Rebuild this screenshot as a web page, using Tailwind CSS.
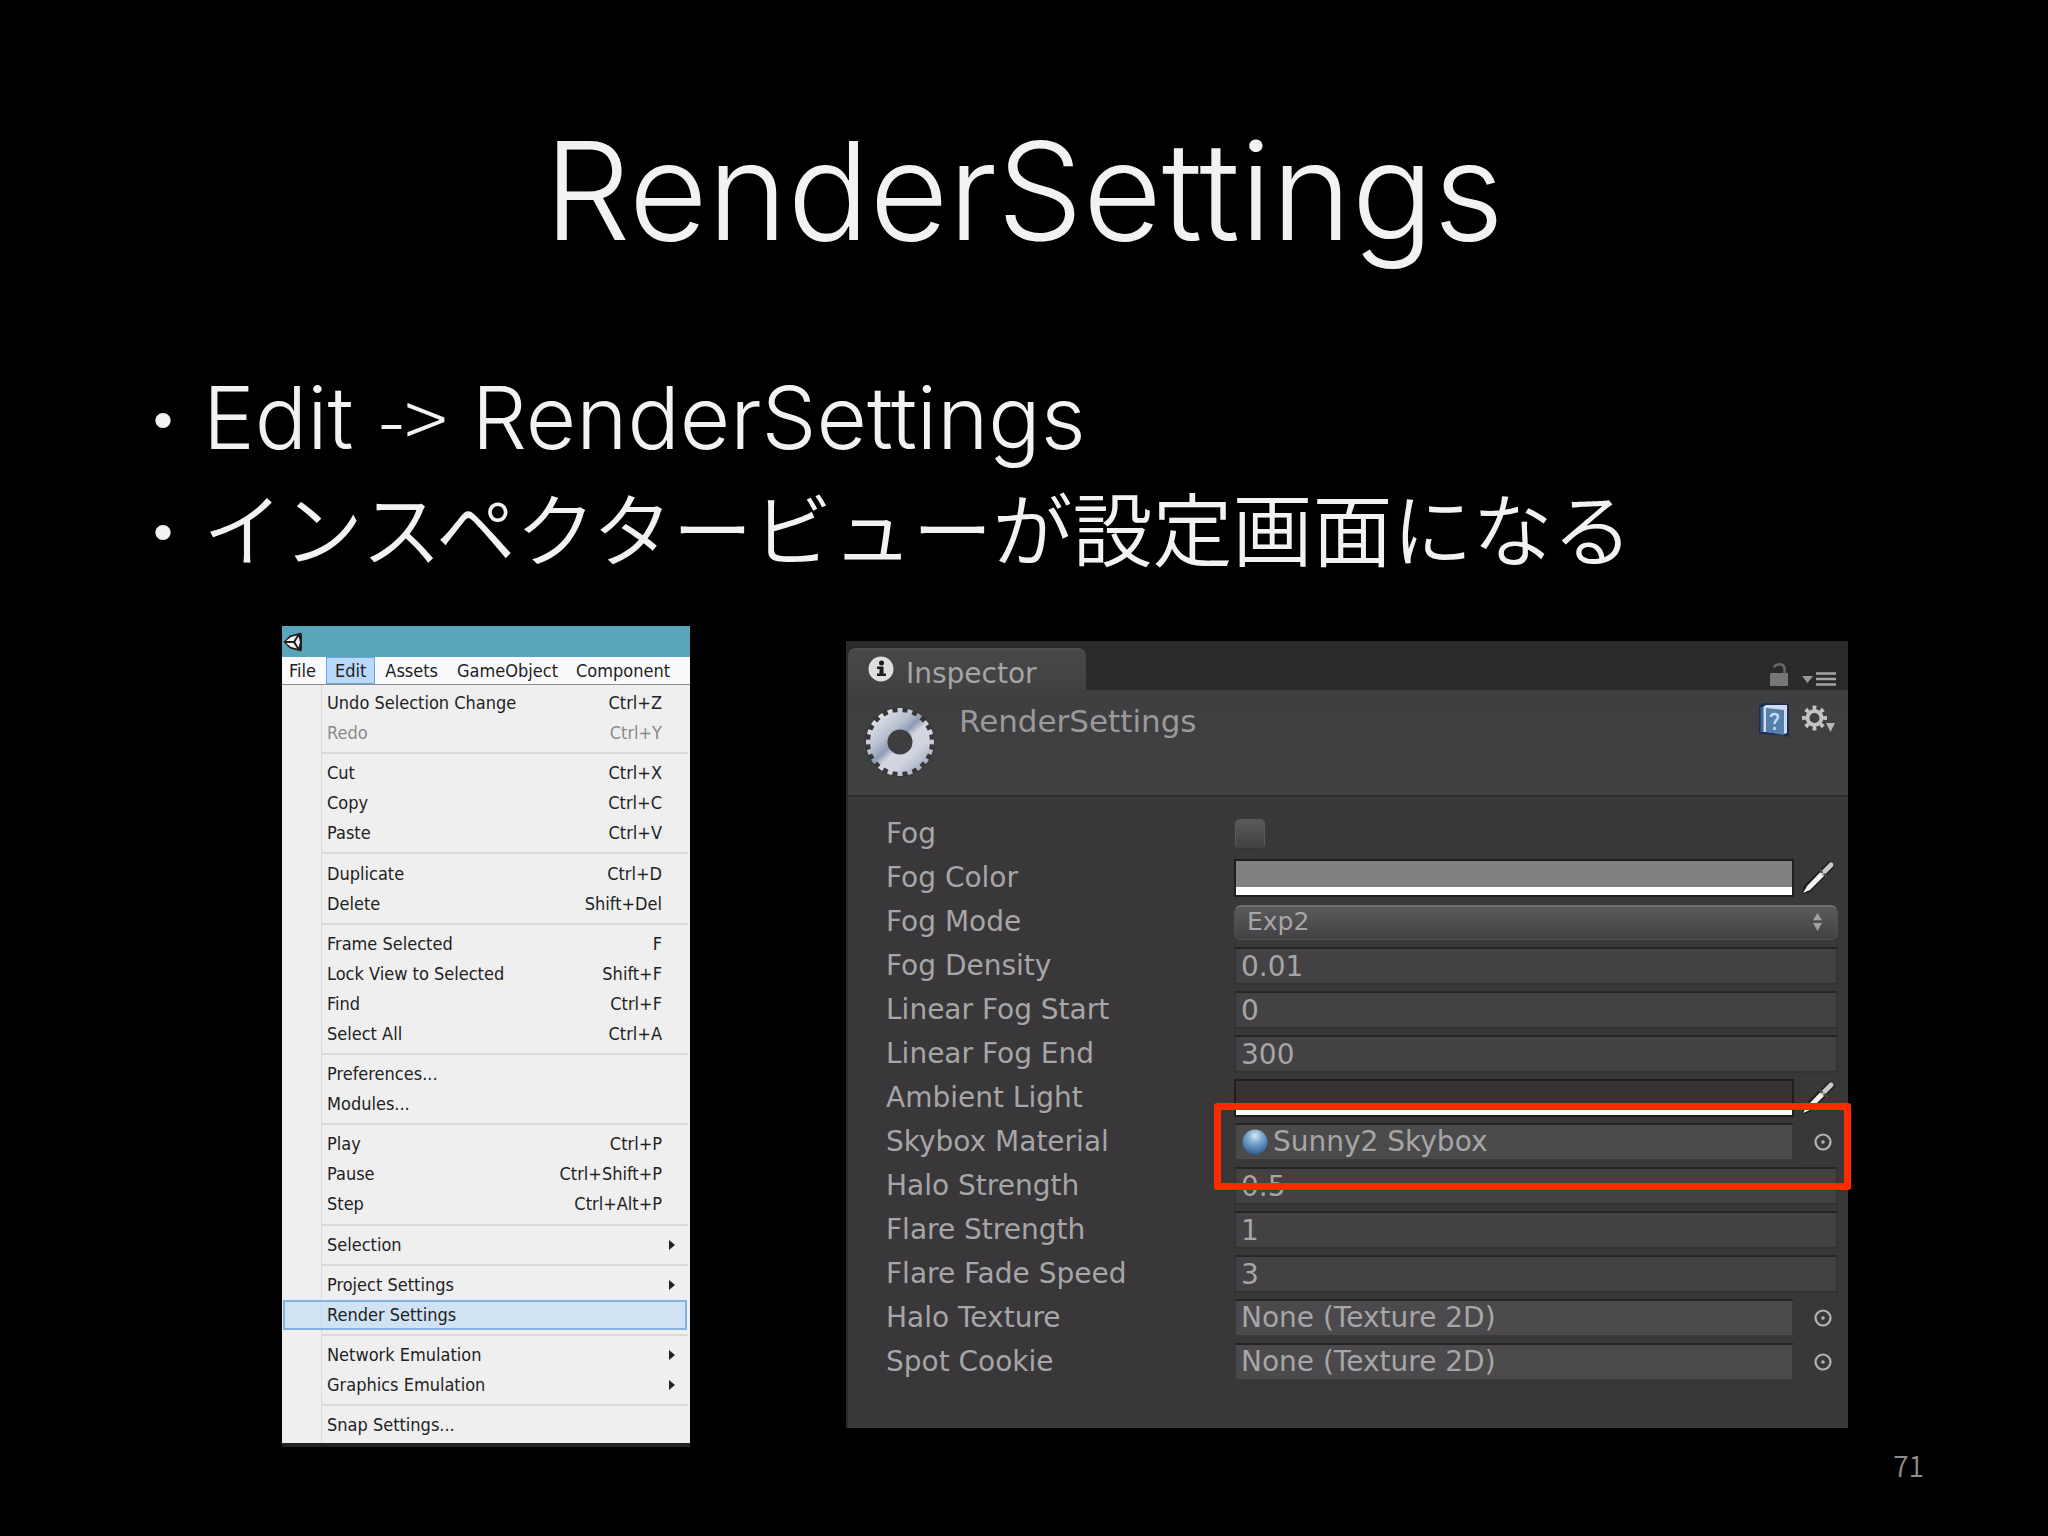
<!DOCTYPE html>
<html lang="ja">
<head>
<meta charset="utf-8">
<meta name="viewport" content="width=device-width, initial-scale=1">
<title>RenderSettings</title>
<script src="https://cdn.jsdelivr.net/npm/@tailwindcss/browser@4"></script>
</head>
<body class="bg-black">
<svg class="hidden" aria-hidden="true">
  <defs>
    <symbol id="target" viewBox="0 0 20 20">
      <circle cx="10" cy="10" r="7.5" fill="none" stroke="#b4b4b4" stroke-width="2.2"/>
      <circle cx="10" cy="10" r="1.8" fill="#b4b4b4"/>
    </symbol>
    <symbol id="dropper" viewBox="0 0 36 36">
      <path d="M2 34 L4 26 L19 11 L25 17 L10 32 Z" fill="#1a1a1a"/>
      <path d="M22 14 L30 6" stroke="#1c1c1c" stroke-width="8" stroke-linecap="round"/>
      <path d="M3 33 L7 26 L20 12.500 L24 16 L10 30 Z" fill="#f4f4f4"/>
      <path d="M23 13 L31 5" stroke="#c9c9c9" stroke-width="5" stroke-linecap="round"/>
      <path d="M20 10 L27 17" stroke="#4c4c4c" stroke-width="2" stroke-linecap="round" stroke-dasharray="3 3"/>
    </symbol>
    <symbol id="submenu" viewBox="0 0 6 10"><path d="M0 0 L6 5 L0 10 Z" fill="#222"/></symbol>
  </defs>
</svg>

<main class="flex min-h-screen flex-col bg-black text-[#f2f2f2]">
  <h1 class="pt-[107px] text-center font-['Inter','Noto_Sans_CJK_JP',sans-serif] text-[136px] leading-[168px] font-light">RenderSettings</h1>

  <ul class="mt-[87px] pl-[123px] font-['Noto_Sans_CJK_JP',sans-serif] text-[80px] leading-[106px] font-[350]">
    <li class="flex h-28"><span class="font-light">・</span><span class="font-['Inter',sans-serif] text-[87px] leading-[112px] font-light">Edit <span class="font-['Noto_Sans_CJK_JP',sans-serif] text-[80px] leading-none">-&gt;</span> RenderSettings</span></li>
    <li class="flex h-28"><span class="font-light">・</span><span class="leading-[102px]">インスペクタービューが設定画面になる</span></li>
  </ul>

  <div class="mt-10 flex items-start gap-[156px] pr-[200px] pl-[282px]">

    <section aria-label="Edit menu" class="w-[408px] shrink-0 border-b-4 border-[#222] bg-[#f0eff0] font-['DejaVu_Sans_Condensed','DejaVu_Sans',sans-serif] text-[18px] text-[#222]">
      <div class="flex h-[31px] items-center bg-[#59a5b9] pl-px">
        <svg class="size-5" viewBox="0 0 20 20" aria-hidden="true">
          <path d="M0.500 10 L7 3.500 L18 0.500 L19 3 L19 17 L18 19.500 L7 16.500 Z" fill="#1f1f1f"/>
          <path d="M3 9 L8 5 L14 3.500 L10.500 9 Z M3 11 L10.500 11 L14 16.500 L8 15 Z M15.500 4.500 L17 10 L15.500 15.500 L12.300 10 Z" fill="#f1f1f1"/>
        </svg>
      </div>
      <nav class="flex h-7 overflow-hidden border-b border-[#8c8c8c] bg-[#fafafc] leading-[26px]">
        <button class="pr-[10px] pl-[7px]">File</button>
        <button class="border border-[#6fa4dc] bg-[#b9d9fa] px-2 leading-6">Edit</button>
        <button class="px-[10px]">Assets</button>
        <button class="px-[9px]">GameObject</button>
        <button class="px-[9px]">Component</button>
      </nav>
      <ul class="flex min-h-[758px] flex-col bg-[linear-gradient(to_right,#f0eff0_39px,#dcdbdc_39px,#dcdbdc_40px,#f0eff0_40px)] pt-[3px] pb-[3px] leading-[30px]">
        <li class="flex flex-auto"><button class="flex flex-1 items-center justify-between pr-7 pl-[45px]"><span>Undo Selection Change</span><span>Ctrl+Z</span></button></li>
        <li class="flex flex-auto text-[#8b8a8b]"><button disabled class="flex flex-1 items-center justify-between pr-7 pl-[45px]"><span>Redo</span><span>Ctrl+Y</span></button></li>
        <li role="separator" class="my-1 mr-[2px] ml-10 h-[2px] bg-[#dad9da]"></li>
        <li class="flex flex-auto"><button class="flex flex-1 items-center justify-between pr-7 pl-[45px]"><span>Cut</span><span>Ctrl+X</span></button></li>
        <li class="flex flex-auto"><button class="flex flex-1 items-center justify-between pr-7 pl-[45px]"><span>Copy</span><span>Ctrl+C</span></button></li>
        <li class="flex flex-auto"><button class="flex flex-1 items-center justify-between pr-7 pl-[45px]"><span>Paste</span><span>Ctrl+V</span></button></li>
        <li role="separator" class="my-1 mr-[2px] ml-10 h-[2px] bg-[#dad9da]"></li>
        <li class="flex flex-auto"><button class="flex flex-1 items-center justify-between pr-7 pl-[45px]"><span>Duplicate</span><span>Ctrl+D</span></button></li>
        <li class="flex flex-auto"><button class="flex flex-1 items-center justify-between pr-7 pl-[45px]"><span>Delete</span><span>Shift+Del</span></button></li>
        <li role="separator" class="my-1 mr-[2px] ml-10 h-[2px] bg-[#dad9da]"></li>
        <li class="flex flex-auto"><button class="flex flex-1 items-center justify-between pr-7 pl-[45px]"><span>Frame Selected</span><span>F</span></button></li>
        <li class="flex flex-auto"><button class="flex flex-1 items-center justify-between pr-7 pl-[45px]"><span>Lock View to Selected</span><span>Shift+F</span></button></li>
        <li class="flex flex-auto"><button class="flex flex-1 items-center justify-between pr-7 pl-[45px]"><span>Find</span><span>Ctrl+F</span></button></li>
        <li class="flex flex-auto"><button class="flex flex-1 items-center justify-between pr-7 pl-[45px]"><span>Select All</span><span>Ctrl+A</span></button></li>
        <li role="separator" class="my-1 mr-[2px] ml-10 h-[2px] bg-[#dad9da]"></li>
        <li class="flex flex-auto"><button class="flex flex-1 items-center justify-between pr-7 pl-[45px]"><span>Preferences...</span></button></li>
        <li class="flex flex-auto"><button class="flex flex-1 items-center justify-between pr-7 pl-[45px]"><span>Modules...</span></button></li>
        <li role="separator" class="my-1 mr-[2px] ml-10 h-[2px] bg-[#dad9da]"></li>
        <li class="flex flex-auto"><button class="flex flex-1 items-center justify-between pr-7 pl-[45px]"><span>Play</span><span>Ctrl+P</span></button></li>
        <li class="flex flex-auto"><button class="flex flex-1 items-center justify-between pr-7 pl-[45px]"><span>Pause</span><span>Ctrl+Shift+P</span></button></li>
        <li class="flex flex-auto"><button class="flex flex-1 items-center justify-between pr-7 pl-[45px]"><span>Step</span><span>Ctrl+Alt+P</span></button></li>
        <li role="separator" class="my-1 mr-[2px] ml-10 h-[2px] bg-[#dad9da]"></li>
        <li class="flex flex-auto"><button class="flex flex-1 items-center justify-between pr-[15px] pl-[45px]"><span>Selection</span><svg class="h-[10px] w-[6px]" aria-hidden="true"><use href="#submenu"/></svg></button></li>
        <li role="separator" class="my-1 mr-[2px] ml-10 h-[2px] bg-[#dad9da]"></li>
        <li class="flex flex-auto"><button class="flex flex-1 items-center justify-between pr-[15px] pl-[45px]"><span>Project Settings</span><svg class="h-[10px] w-[6px]" aria-hidden="true"><use href="#submenu"/></svg></button></li>
        <li class="flex flex-auto"><button class="mr-[3px] ml-px flex flex-1 items-center justify-between border-2 border-[#86b2e0] bg-[#b0d8f8]/50 pl-[42px] leading-[26px]"><span>Render Settings</span></button></li>
        <li role="separator" class="my-1 mr-[2px] ml-10 h-[2px] bg-[#dad9da]"></li>
        <li class="flex flex-auto"><button class="flex flex-1 items-center justify-between pr-[15px] pl-[45px]"><span>Network Emulation</span><svg class="h-[10px] w-[6px]" aria-hidden="true"><use href="#submenu"/></svg></button></li>
        <li class="flex flex-auto"><button class="flex flex-1 items-center justify-between pr-[15px] pl-[45px]"><span>Graphics Emulation</span><svg class="h-[10px] w-[6px]" aria-hidden="true"><use href="#submenu"/></svg></button></li>
        <li role="separator" class="my-1 mr-[2px] ml-10 h-[2px] bg-[#dad9da]"></li>
        <li class="flex flex-auto"><button class="flex flex-1 items-center justify-between pr-7 pl-[45px]"><span>Snap Settings...</span></button></li>
      </ul>
    </section>

    <section aria-label="Inspector" class="mt-[15px] min-w-0 flex-1 border-l-2 border-[#2c2b2d] bg-[#3a373a] font-['DejaVu_Sans',sans-serif] text-[28px] leading-9 text-[#a6a5a7]">
      <div class="flex h-[49px] items-end justify-between bg-[#2a2a2a] pr-3">
        <div class="flex h-[42px] w-[238px] items-start gap-3 rounded-t-lg border-t-2 border-[#505050] bg-linear-to-b from-[#484848] to-[#414141] pt-[6px] pl-5">
          <svg class="size-[26px] shrink-0" viewBox="0 0 26 26" aria-hidden="true">
            <circle cx="13" cy="13" r="12.500" fill="#dedede"/>
            <circle cx="13.500" cy="7" r="2.500" fill="#1b1b1b"/>
            <path d="M9 10.500 H15.500 V17.500 H18 V20 H9 V17.500 H11.500 V13 H9 Z" fill="#1b1b1b"/>
          </svg>
          <span>Inspector</span>
        </div>
        <div class="flex items-end gap-[14px] pb-1">
          <button aria-label="Lock"><svg class="h-6 w-[18px]" viewBox="0 0 18 24" aria-hidden="true">
            <rect y="11" width="18" height="13" rx="1" fill="#777"/>
            <path d="M4 5.500 C5 2 13 0.500 14.500 6 V12" fill="none" stroke="#6a6a6a" stroke-width="2.500"/>
          </svg></button>
          <button aria-label="Tab options"><svg class="h-[14px] w-[34px]" viewBox="0 0 34 14" aria-hidden="true">
            <path d="M0 4 H11 L5.500 11 Z" fill="#999"/>
            <path d="M14 1.500 H34 M14 7 H34 M14 12.500 H34" stroke="#a5a5a5" stroke-width="2.600"/>
          </svg></button>
        </div>
      </div>

      <header class="flex h-[107px] items-start border-b-2 border-[#2f2d2f] bg-linear-to-b from-[#3e3f40] to-[#424042] pr-3">
        <svg class="mt-4 ml-4 size-[72px] shrink-0" viewBox="-36 -36 72 72" aria-hidden="true">
          <defs><linearGradient id="steel" gradientUnits="userSpaceOnUse" x1="-24" y1="-26" x2="24" y2="26">
            <stop offset="0" stop-color="#e0e3ea"/><stop offset=".3" stop-color="#b9c0cf"/><stop offset=".45" stop-color="#8f9bb6"/><stop offset=".56" stop-color="#d3d7e0"/><stop offset=".75" stop-color="#d0d4de"/><stop offset="1" stop-color="#a0aac0"/>
          </linearGradient></defs>
          <circle r="31" fill="none" stroke="#2b2b2d" stroke-width="8" opacity=".4"/>
          <circle r="30.500" fill="none" stroke="url(#steel)" stroke-width="7" pathLength="200" stroke-dasharray="5 5" stroke-dashoffset="2.500"/>
          <circle r="21" fill="none" stroke="url(#steel)" stroke-width="18"/>
          <circle r="12.500" fill="#3e3e40"/>
        </svg>
        <h2 class="mt-[13px] ml-[23px] flex-1 text-[31px] text-[#9a999b]">RenderSettings</h2>
        <div class="mt-[13px] flex items-start gap-3">
          <button aria-label="Help"><svg class="h-[34px] w-8" viewBox="0 0 32 34" aria-hidden="true">
            <path d="M1 3 L5 0 L31 1 V34 L22 32 L1 31 Z" fill="#1d2d4d"/>
            <path d="M5 4 L8 2 H29 V30 L26 31 L8 29 H5 Z" fill="#cfdcec"/>
            <path d="M4 4 V29" stroke="#3d659a" stroke-width="3"/>
            <path d="M8 5 L26 7 V32 L8 29 Z" fill="#557fac"/>
            <path d="M13 14 C13 10 20 10 20 14 C20 17 16.500 17 16.500 21 M16.500 24 V27" fill="none" stroke="#c4d9ec" stroke-width="2.500"/>
          </svg></button>
          <button aria-label="Settings"><svg class="h-[30px] w-[34px]" viewBox="0 0 34 30" aria-hidden="true">
            <circle cx="12.500" cy="15" r="10.500" fill="none" stroke="#c4c4c4" stroke-width="4" pathLength="80" stroke-dasharray="4.600 5.400" stroke-dashoffset="2.300"/>
            <circle cx="12.500" cy="15" r="7" fill="none" stroke="#c4c4c4" stroke-width="4"/>
            <path d="M24 20 H33 L28.500 29 Z" fill="#b5b5b5"/>
          </svg></button>
        </div>
      </header>

      <form class="pt-[15px] pb-[44px] pr-[10px]">
        <div class="flex h-11 items-center">
          <label for="fog" class="w-[387px] shrink-0 pl-[38px]">Fog</label>
          <input id="fog" type="checkbox" class="size-[30px] appearance-none rounded-[5px] border border-[#5c5a5d] border-b-[#333] bg-linear-to-b from-[#5a585b] to-[#434144]">
        </div>
        <div class="flex h-11 items-center">
          <label for="fog-color" class="w-[386px] shrink-0 pl-[38px]">Fog Color</label>
          <button id="fog-color" type="button" class="h-[38px] flex-1 border-2 border-[#201e21] bg-[#828083]"><span class="flex h-full items-end"><span class="h-2 flex-1 bg-white"></span></span></button>
          <button type="button" aria-label="Pick fog color" class="ml-[6px] w-[38px]"><svg class="size-9" aria-hidden="true"><use href="#dropper"/></svg></button>
        </div>
        <div class="flex h-11 items-center">
          <label for="fog-mode" class="w-[386px] shrink-0 pl-[38px]">Fog Mode</label>
          <div class="grid flex-1 items-center">
            <select id="fog-mode" class="col-start-1 row-start-1 h-[35px] appearance-none rounded-[7px] border border-t-2 border-[#525053] border-t-[#6d6b6e] bg-linear-to-b from-[#5b595c] to-[#434144] pb-[2px] pl-3 text-[25px] leading-7"><option>Exp2</option></select>
            <svg class="pointer-events-none col-start-1 row-start-1 mr-4 h-[18px] w-[9px] justify-self-end" viewBox="0 0 10 20" aria-hidden="true"><path d="M5 0 L10 8 H0 Z M0 11 H10 L5 20 Z" fill="#a0a0a0"/></svg>
          </div>
        </div>
        <div class="flex h-11 items-center">
          <label for="fog-density" class="w-[386px] shrink-0 pl-[38px]">Fog Density</label>
          <input id="fog-density" value="0.01" class="h-[38px] min-w-0 flex-1 border-2 border-[#343235] border-t-[#262427] bg-[#434144] pl-[5px]">
        </div>
        <div class="flex h-11 items-center">
          <label for="fog-start" class="w-[386px] shrink-0 pl-[38px]">Linear Fog Start</label>
          <input id="fog-start" value="0" class="h-[38px] min-w-0 flex-1 border-2 border-[#343235] border-t-[#262427] bg-[#434144] pl-[5px]">
        </div>
        <div class="flex h-11 items-center">
          <label for="fog-end" class="w-[386px] shrink-0 pl-[38px]">Linear Fog End</label>
          <input id="fog-end" value="300" class="h-[38px] min-w-0 flex-1 border-2 border-[#343235] border-t-[#262427] bg-[#434144] pl-[5px]">
        </div>
        <div class="flex h-11 items-center">
          <label for="ambient" class="w-[386px] shrink-0 pl-[38px]">Ambient Light</label>
          <button id="ambient" type="button" class="h-[38px] flex-1 border-2 border-[#201e21] bg-[#363235]"><span class="flex h-full items-end"><span class="h-2 flex-1 bg-white"></span></span></button>
          <button type="button" aria-label="Pick ambient light" class="ml-[6px] w-[38px]"><svg class="size-9" aria-hidden="true"><use href="#dropper"/></svg></button>
        </div>
        <div class="relative flex h-11 items-center">
          <label for="skybox" class="w-[386px] shrink-0 pl-[38px]">Skybox Material</label>
          <button id="skybox" type="button" class="flex h-[38px] flex-1 items-center gap-[5px] border-2 border-[#3a383a] border-t-[#242224] bg-[#4b4a4a] pl-[6px] text-left">
            <svg class="size-[26px]" viewBox="0 0 26 26" aria-hidden="true">
              <defs><radialGradient id="ball" cx=".5" cy=".25" r=".75"><stop offset="0" stop-color="#d6e8f2"/><stop offset=".4" stop-color="#7aa8cf"/><stop offset="1" stop-color="#2f5f94"/></radialGradient></defs>
              <circle cx="13" cy="13" r="12.500" fill="url(#ball)"/>
            </svg>
            <span>Sunny2 Skybox</span>
          </button>
          <button type="button" aria-label="Select skybox material" class="ml-[19px] w-[25px]"><svg class="size-5" aria-hidden="true"><use href="#target"/></svg></button>
          <div class="pointer-events-none absolute -top-[17px] -right-[13px] -bottom-[26px] left-[366px] rounded-[3px] border-[7px] border-[#ff2a00]"></div>
        </div>
        <div class="flex h-11 items-center">
          <label for="halo-strength" class="w-[386px] shrink-0 pl-[38px]">Halo Strength</label>
          <input id="halo-strength" value="0.5" class="h-[38px] min-w-0 flex-1 border-2 border-[#343235] border-t-[#262427] bg-[#434144] pl-[5px]">
        </div>
        <div class="flex h-11 items-center">
          <label for="flare-strength" class="w-[386px] shrink-0 pl-[38px]">Flare Strength</label>
          <input id="flare-strength" value="1" class="h-[38px] min-w-0 flex-1 border-2 border-[#343235] border-t-[#262427] bg-[#434144] pl-[5px]">
        </div>
        <div class="flex h-11 items-center">
          <label for="flare-fade" class="w-[386px] shrink-0 pl-[38px]">Flare Fade Speed</label>
          <input id="flare-fade" value="3" class="h-[38px] min-w-0 flex-1 border-2 border-[#343235] border-t-[#262427] bg-[#434144] pl-[5px]">
        </div>
        <div class="flex h-11 items-center">
          <label for="halo-texture" class="w-[386px] shrink-0 pl-[38px]">Halo Texture</label>
          <button id="halo-texture" type="button" class="h-[38px] flex-1 border-2 border-[#3a383a] border-t-[#242224] bg-[#4b494c] pl-[5px] text-left leading-8">None (Texture 2D)</button>
          <button type="button" aria-label="Select halo texture" class="ml-[19px] w-[25px]"><svg class="size-5" aria-hidden="true"><use href="#target"/></svg></button>
        </div>
        <div class="flex h-11 items-center">
          <label for="spot-cookie" class="w-[386px] shrink-0 pl-[38px]">Spot Cookie</label>
          <button id="spot-cookie" type="button" class="h-[38px] flex-1 border-2 border-[#3a383a] border-t-[#242224] bg-[#4b494c] pl-[5px] text-left leading-8">None (Texture 2D)</button>
          <button type="button" aria-label="Select spot cookie" class="ml-[19px] w-[25px]"><svg class="size-5" aria-hidden="true"><use href="#target"/></svg></button>
        </div>
      </form>
    </section>
  </div>

  <footer class="pr-[124px] text-right font-['Noto_Sans_CJK_JP',sans-serif] text-[28px] leading-9 font-[350] text-[#8c8c8c]">71</footer>
</main>
</body>
</html>
